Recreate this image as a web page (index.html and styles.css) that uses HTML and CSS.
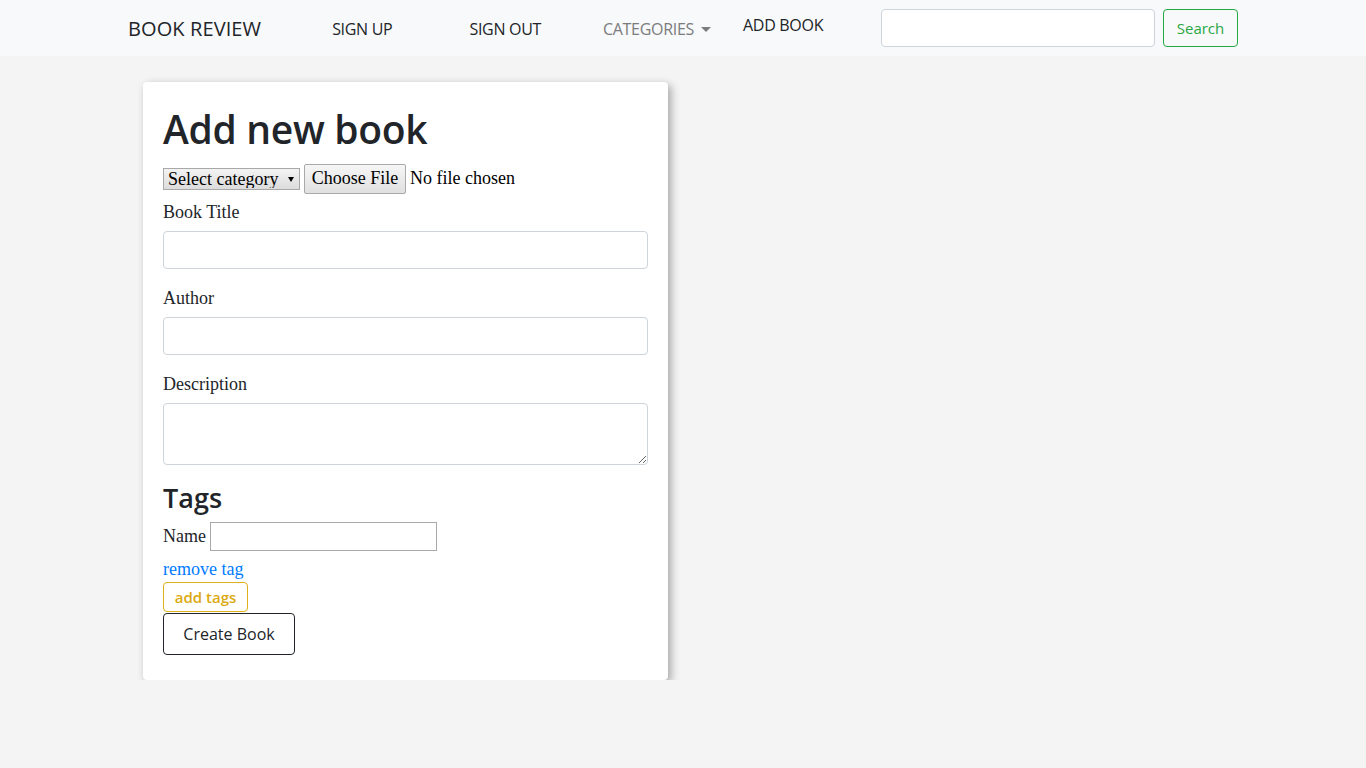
FILE: index.html
```html
<!DOCTYPE html>
<html lang="en">
<head>
<meta charset="utf-8">
<title>Book Review - Add Book</title>
<link rel="stylesheet" href="styles.css">
</head>
<body>
<nav class="navbar">
  <div class="nav-inner">
    <a class="brand" href="#">BOOK REVIEW</a>
    <ul class="nav-links">
      <li><a class="nav-link signup" href="#">SIGN UP</a></li>
      <li><a class="nav-link signout" href="#">SIGN OUT</a></li>
      <li><a class="nav-link categories" href="#">CATEGORIES<span class="caret"></span></a></li>
      <li><a class="nav-link addbook" href="#">ADD BOOK</a></li>
    </ul>
    <form class="search">
      <input class="search-input" type="search" aria-label="Search">
      <button class="search-btn" type="button">Search</button>
    </form>
  </div>
</nav>

<main class="page">
  <div class="card">
    <h1 class="title">Add new book</h1>
    <div class="controls">
      <span class="select-wrap">
        <select class="category-select">
          <option>Select category</option>
        </select>
      </span>
      <span class="file-btn">Choose File</span>
      <span class="file-text">No file chosen</span>
    </div>
    <div class="form-group">
      <label class="label">Book Title</label>
      <input class="form-control" type="text">
    </div>
    <div class="form-group">
      <label class="label">Author</label>
      <input class="form-control" type="text">
    </div>
    <div class="form-group">
      <label class="label">Description</label>
      <textarea class="form-control textarea" rows="2"></textarea>
    </div>
    <h3 class="tags-title">Tags</h3>
    <div class="tag-row">
      <span class="tag-label">Name</span>
      <input class="tag-input" type="text">
    </div>
    <a class="remove-tag" href="#">remove tag</a>
    <div class="btn-row">
      <button class="btn-add" type="button">add tags</button>
    </div>
    <div class="btn-row">
      <button class="btn-create" type="button">Create Book</button>
    </div>
  </div>
</main>
</body>
</html>
```

FILE: styles.css
```css
* { box-sizing: border-box; }

body {
  margin: 0;
  background: #f4f4f4;
  font-family: "Liberation Serif", serif;
  font-size: 18px;
  color: #212529;
}

.navbar {
  background: #f8f9fa;
  height: 56px;
}

.nav-inner {
  width: 1110px;
  margin: 0 auto;
  height: 56px;
  display: flex;
  align-items: center;
  font-family: "Open Sans", sans-serif;
}

.brand {
  font-size: 20px;
  color: #212529;
  text-decoration: none;
  letter-spacing: 0.1px;
}

.nav-links {
  list-style: none;
  margin: 0;
  padding: 0;
  display: flex;
  align-items: center;
}

.nav-link {
  font-size: 16px;
  color: #212529;
  text-decoration: none;
  display: flex;
  align-items: center;
  letter-spacing: -0.3px;
  padding-top: 2px;
}

.signup { margin-left: 71px; }
.signout { margin-left: 77px; }
.categories { margin-left: 62px; color: #7b7c7d; }
.addbook { margin-left: 32px; padding-top: 0; position: relative; top: -3px; }

.caret {
  display: inline-block;
  margin-left: 7px;
  border-top: 5px solid #7b7c7d;
  border-left: 5px solid transparent;
  border-right: 5px solid transparent;
}

.search {
  margin-left: auto;
  display: flex;
  gap: 8px;
}

.search-input {
  width: 274px;
  height: 38px;
  border: 1px solid #ced4da;
  border-radius: 4px;
  background: #fff;
}

.search-btn {
  width: 75px;
  height: 38px;
  border: 1px solid #28a745;
  border-radius: 4px;
  background: transparent;
  color: #28a745;
  font-family: "Open Sans", sans-serif;
  font-size: 15px;
}

.page {
  padding: 26px 0 0 143px;
}

.card {
  width: 525px;
  background: #fff;
  border-radius: 4px;
  padding: 20px 20px 25px;
  box-shadow: 3px 3px 8px rgba(0, 0, 0, 0.32);
}

.title {
  margin: 3px 0 5px;
  font-family: "Open Sans", sans-serif;
  font-weight: 600;
  font-size: 39px;
  line-height: 48px;
  letter-spacing: -0.3px;
}

.controls {
  height: 41px;
  display: flex;
  align-items: center;
}

.select-wrap {
  position: relative;
  display: inline-block;
}

.select-wrap::after {
  content: "";
  position: absolute;
  right: 6px;
  top: 9px;
  border-top: 5px solid #000;
  border-left: 3px solid transparent;
  border-right: 3px solid transparent;
  pointer-events: none;
}

.category-select {
  appearance: none;
  -webkit-appearance: none;
  font: inherit;
  font-size: 18px;
  height: 22px;
  width: 137px;
  padding: 0 0 0 4px;
  border: 1px solid #a9a9a9;
  border-radius: 0;
  background: linear-gradient(#f3f3f3, #dcdcdc);
  color: #000;
  line-height: 18px;
}

.file-btn {
  margin-left: 4px;
  height: 30px;
  width: 102px;
  display: inline-flex;
  align-items: center;
  justify-content: center;
  border: 1px solid #a9a9a9;
  border-radius: 2px;
  background: linear-gradient(#f6f6f6, #e0e0e0);
  color: #000;
}

.file-text {
  margin-left: 4px;
  color: #000;
}

.form-group {
  margin-bottom: 16px;
}

.label {
  display: block;
  line-height: 24px;
  margin-bottom: 8px;
  padding-top: 1px;
  height: 24px;
}

.form-control {
  display: block;
  width: 100%;
  height: 38px;
  border: 1px solid #ced4da;
  border-radius: 4px;
  background: #fff;
  font: inherit;
}

.textarea {
  height: 62px;
  resize: vertical;
}

.tags-title {
  margin: 0 0 7px;
  font-family: "Open Sans", sans-serif;
  font-weight: 600;
  font-size: 27px;
  line-height: 34px;
}

.tag-row {
  display: flex;
  align-items: center;
  height: 29px;
}

.tag-label {
  margin-right: 4px;
}

.tag-input {
  width: 227px;
  height: 29px;
  border: 1px solid #a9a9a9;
  border-radius: 0;
  background: #fff;
}

.remove-tag {
  display: block;
  margin-top: 6px;
  line-height: 24px;
  color: #007bff;
  text-decoration: none;
}

.btn-row {
  display: flex;
}

.btn-add {
  margin-top: 1px;
  height: 30px;
  width: 85px;
  border: 1px solid #e0b01a;
  border-radius: 4px;
  background: #fff;
  color: #dcaa12;
  font-family: "Open Sans", sans-serif;
  font-weight: 600;
  font-size: 15px;
  padding: 0;
}

.btn-create {
  margin-top: 1px;
  height: 42px;
  width: 132px;
  border: 1px solid #212529;
  border-radius: 4px;
  background: #fff;
  color: #212529;
  font-family: "Open Sans", sans-serif;
  font-size: 16px;
  padding: 0;
}
```
